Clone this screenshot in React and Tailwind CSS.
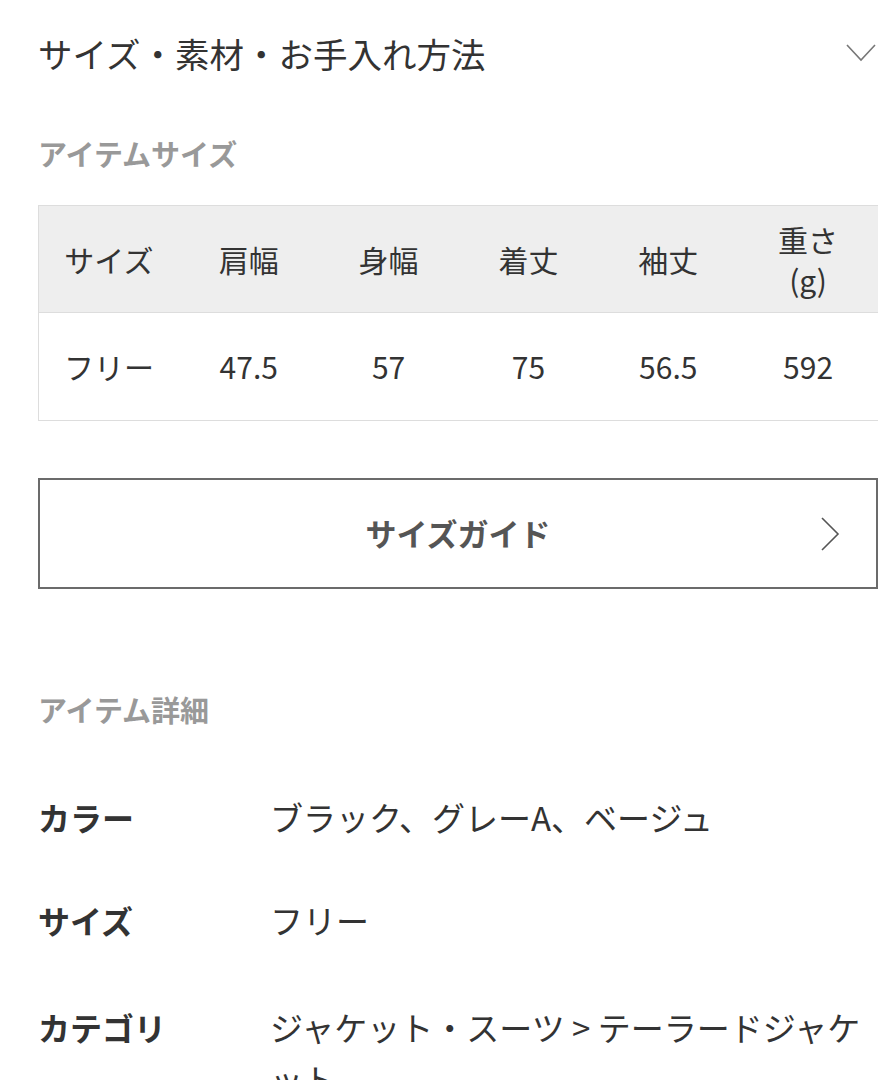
import React from 'react';

const font = { fontFamily: '"Noto Sans CJK JP", "Noto Sans", sans-serif' };

const heads = ['サイズ', '肩幅', '身幅', '着丈', '袖丈'];
const vals = ['フリー', '47.5', '57', '75', '56.5', '592'];

const details = [
  { label: 'カラー', value: 'ブラック、グレーA、ベージュ', mt: 'mt-[68px]' },
  { label: 'サイズ', value: 'フリー', mt: 'mt-[51px]' },
  { label: 'カテゴリ', value: 'ジャケット・スーツ > テーラードジャケット', mt: 'mt-[55px]' },
];

function App() {
  return (
    <div className="w-[896px] h-[1080px] overflow-hidden bg-white pl-[38px] pr-[18px] text-[#333]" style={font}>
      <div className="h-[106px] flex items-center justify-between">
        <h2 className="text-[34.5px] leading-none font-normal">サイズ・素材・お手入れ方法</h2>
        <svg width="30" height="18" viewBox="0 0 30 18" className="mr-[2px]">
          <path d="M1 1 L15 16 L29 1" fill="none" stroke="#777" strokeWidth="1.6" />
        </svg>
      </div>

      <div className="mt-[33px] text-[29px] leading-[28px] font-bold text-[#999]">アイテムサイズ</div>

      <div className="mt-[38px] border-l border-t border-b border-[#dddddd]">
        <div className="grid grid-cols-6 h-[107px] bg-[#eeeeee] border-b border-[#dddddd] text-[30px]">
          {heads.map((h) => (
            <div key={h} className="flex items-center justify-center">{h}</div>
          ))}
          <div className="flex flex-col items-center justify-center leading-[40px]">
            <span>重さ</span>
            <span>(g)</span>
          </div>
        </div>
        <div className="grid grid-cols-6 h-[107px] text-[30px]">
          {vals.map((v) => (
            <div key={v} className="flex items-center justify-center">{v}</div>
          ))}
        </div>
      </div>

      <div className="mt-[57px] h-[111px] border-2 border-[#6b6b6b] flex items-center justify-center relative">
        <span className="text-[31px] font-bold text-[#555]">サイズガイド</span>
        <svg width="20" height="34" viewBox="0 0 20 34" className="absolute right-[36px] top-1/2 -translate-y-1/2">
          <path d="M2 1 L18 17 L2 33" fill="none" stroke="#555" strokeWidth="1.6" />
        </svg>
      </div>

      <div className="mt-[106px] text-[29px] leading-[28px] font-bold text-[#999]">アイテム詳細</div>

      {details.map((d) => (
        <div key={d.label} className={`${d.mt} flex text-[33px] leading-[52px]`}>
          <div className="w-[232px] shrink-0 font-bold text-[32px]">{d.label}</div>
          <div className="flex-1">{d.value}</div>
        </div>
      ))}
    </div>
  );
}

export default App;
